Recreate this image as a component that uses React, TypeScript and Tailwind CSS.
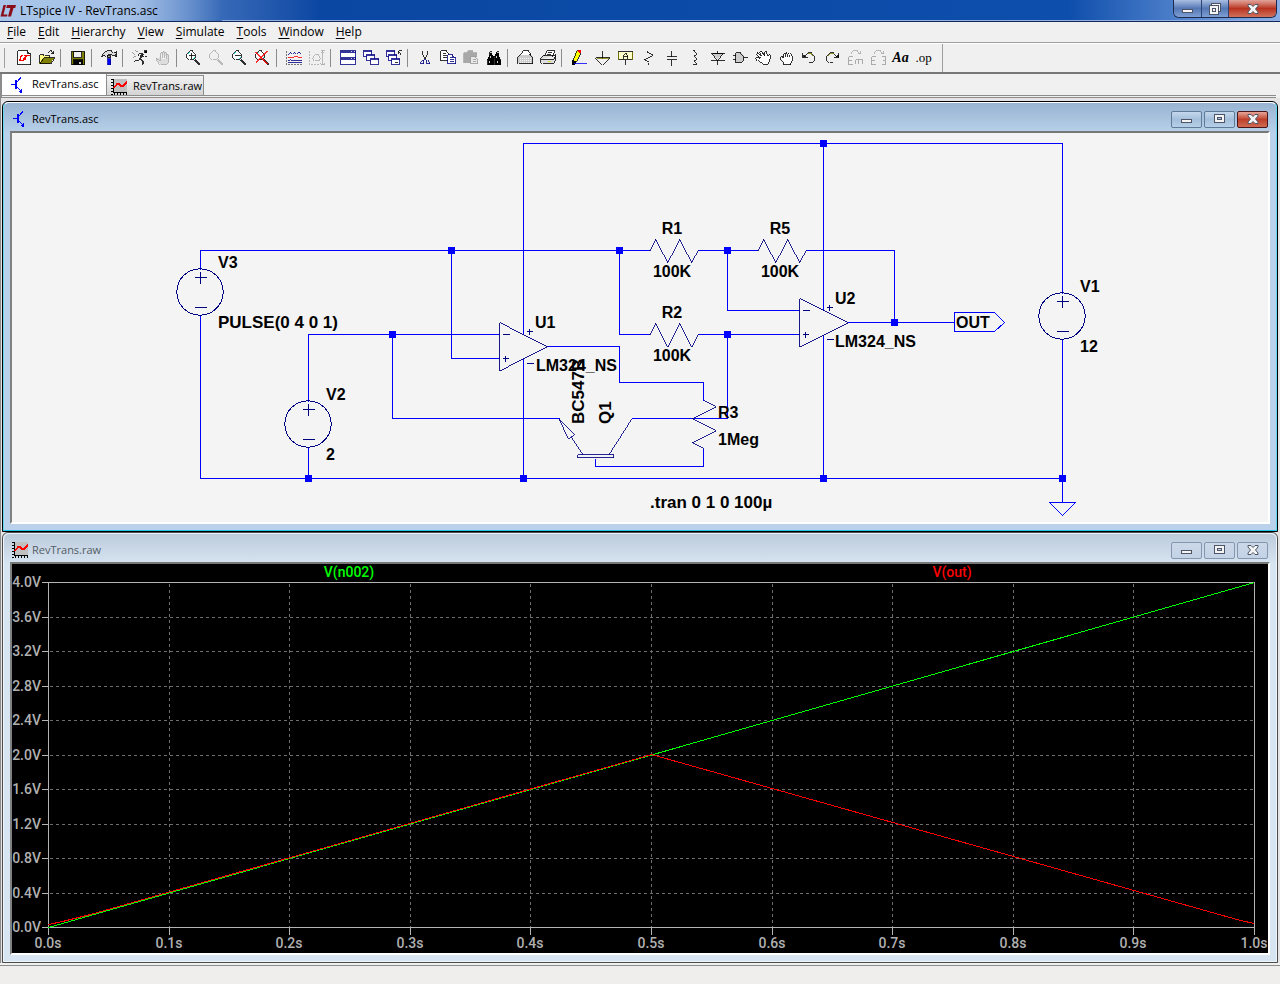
import type { ReactNode } from "react";

const menus = ["File", "Edit", "Hierarchy", "View", "Simulate", "Tools", "Window", "Help"];

function Icon({ children }: { children: ReactNode }) {
  return (
    <svg className="h-4 w-4" viewBox="0 0 16 16" fill="none" stroke="#000" strokeWidth=".8" shapeRendering="crispEdges" aria-hidden="true">
      <g transform="translate(.5 .5)">{children}</g>
    </svg>
  );
}

function Lens({ color = "#000", children }: { color?: string; children?: ReactNode }) {
  return (
    <>
      <path d="M3 0H6L9 3V6L6 9H3L0 6V3Z" stroke={color} fill={color === "#000" ? "#fff" : "none"} />
      {color === "#000" && <path d="M2 3V2H3M7 7V8M8 7H7" stroke="#00dede" />}
      <path d="M9 9L14 14M9 8L14 13M8 9L13 14" stroke={color} />
      {children}
    </>
  );
}

function MiniWindow({ x, y }: { x: number; y: number }) {
  return (
    <>
      <rect x={x} y={y} width="8" height="6" fill="#fff" stroke="#000080" />
      <path d={`M${x} ${y + 1}H${x + 8}`} stroke="#000080" />
    </>
  );
}

type Tool = { name: string; icon: ReactNode };

const groups: Tool[][] = [
  [
    {
      name: "New Schematic",
      icon: (
        <>
          <path d="M1 0H11L14 3V14H1Z" fill="#fff" />
          <path d="M11 0V3H14" />
          <path d="M5 5L3 10H7L8 7M7 5H13M10 5L8 10M6 5H4" stroke="#f00" strokeWidth="1.4" />
        </>
      ),
    },
    {
      name: "Open",
      icon: (
        <>
          <path d="M0 13V4H4L5 5H10V7" fill="#ff8" />
          <path d="M0 13L4 7H15L11 13Z" fill="#808000" />
          <path d="M8 2L10 0H12L14 2M14 0V3H11" />
        </>
      ),
    },
  ],
  [
    {
      name: "Save",
      icon: (
        <>
          <rect x="1" y="1" width="13" height="13" fill="#808000" />
          <rect x="3" y="1" width="8" height="6" fill="#efefef" />
          <rect x="3" y="9" width="9" height="5" fill="#000" />
          <path d="M10 11V13M9 11V13" stroke="#fff" />
        </>
      ),
    },
  ],
  [
    {
      name: "Control Panel",
      icon: (
        <>
          <path d="M0 5L2 2L5 0H10L12 2H14V1H15V6H14V4L11 5L9 4H6L5 6L3 4L0 6Z" fill="#ddd" />
          <rect x="6" y="5" width="3" height="2" fill="#999" />
          <rect x="6" y="8" width="3" height="6" fill="#00f" stroke="#0000a0" />
        </>
      ),
    },
  ],
  [
    {
      name: "Run",
      icon: (
        <>
          <rect x="12" y="0" width="2" height="2" fill="#000" />
          <path d="M11 3L8 7M10 3L7 7M9 3L7 6M10 3H6L5 5M10 4L12 6H14M8 7L11 10L10 14M7 7L10 10V13M7 8L5 10H2L1 11" />
          <path d="M0 1L3 4M2 0L5 2M0 7L3 5" stroke="#888" />
        </>
      ),
    },
    {
      name: "Halt",
      icon: (
        <path
          d="M3 9L1 7V9L5 14H10L13 11V4L12 3L11 4V8M11 4V2L10 1L9 2V7M9 2V1L8 0L7 1V7M7 2L6 1L5 2V10L3 8"
          stroke="#aaa"
          fill="#ddd"
        />
      ),
    },
  ],
  [
    { name: "Zoom area", icon: <Lens><path d="M2 5H8M5 2V8" /></Lens> },
    { name: "Pan", icon: <Lens color="#aaa" /> },
    { name: "Zoom back", icon: <Lens><path d="M2 5H8" /></Lens> },
    {
      name: "Zoom full extents",
      icon: (
        <Lens>
          <path d="M0 1L12 13M1 1L13 13M0 12L12 0M0 11L11 0" stroke="#f00" />
        </Lens>
      ),
    },
  ],
  [
    {
      name: "Autorange",
      icon: (
        <>
          <path d="M0 0V14H15" stroke="#555" strokeDasharray="2 1" />
          <path d="M1 4L4 1L6 3L8 1L10 3L13 1L15 3" stroke="#000080" />
          <path d="M1 7H5L7 6H10L12 7H15" stroke="#f00" />
          <path d="M1 10L3 9L5 10H15M1 12H15" stroke="#000080" />
        </>
      ),
    },
    {
      name: "Setup",
      icon: (
        <g stroke="#aaa">
          <path d="M0 0V14H10" strokeDasharray="2 1" />
          <path d="M3 7L5 4H9L11 7L9 10H5Z" />
          <path d="M11 0H15M13 0V14M11 14H15M11 2L13 0L15 2M11 12L13 14L15 12" />
        </g>
      ),
    },
  ],
  [
    {
      name: "Tile Windows",
      icon: (
        <>
          <rect x="0" y="0" width="15" height="14" fill="#fff" stroke="#000080" />
          <path d="M0 1H15M0 2H15M0 7H15M0 8H15M0 9H15" stroke="#000080" />
          <path d="M10 1H11M13 1H14M10 8H11M13 8H14" stroke="#fff" />
        </>
      ),
    },
    {
      name: "Cascade Windows",
      icon: (
        <>
          <MiniWindow x={0} y={0} />
          <MiniWindow x={3} y={4} />
          <MiniWindow x={7} y={8} />
        </>
      ),
    },
    {
      name: "Close All",
      icon: (
        <>
          <MiniWindow x={0} y={0} />
          <MiniWindow x={2} y={4} />
          <MiniWindow x={5} y={8} />
          <path d="M12 0H15M12 0V3M12 0L15 4" />
          <path d="M8 12H11" />
        </>
      ),
    },
  ],
  [
    {
      name: "Cut",
      icon: (
        <>
          <path d="M5 0V3L8 8M10 0V3L7 8" />
          <path d="M7 8L5 10H4L3 11V13H6V9M8 8L10 10H11L12 11V13H9V9" stroke="#000080" />
        </>
      ),
    },
    {
      name: "Copy",
      icon: (
        <>
          <path d="M0 0H6L8 2V10H0Z" fill="#fff" />
          <path d="M2 3H5M2 5H6M2 7H6" />
          <path d="M7 4H12L15 7V13H7Z" fill="#fff" stroke="#000080" />
          <path d="M9 7H11M9 9H13M9 11H13M12 4V7H15" stroke="#000080" />
        </>
      ),
    },
    {
      name: "Paste",
      icon: (
        <>
          <path d="M0 2H4V0H9V2H13V12H0Z" fill="#a8a8a8" stroke="#a8a8a8" />
          <path d="M7 6H12L14 8V13H7Z" fill="#e8e8e8" stroke="#999" />
          <path d="M9 9H12M9 11H12" stroke="#999" />
        </>
      ),
    },
    {
      name: "Find",
      icon: (
        <>
          <path d="M3 1H5V4L7 6V14H1V9L3 4ZM10 1H12V4L14 9V14H8V6Z" fill="#000" />
          <path d="M6 6H9M6 8H9" />
          <path d="M4 5V7M3 10V12M10 5V7M11 10V12M3 2H5M10 2H12" stroke="#fff" />
        </>
      ),
    },
  ],
  [
    {
      name: "Print Setup",
      icon: (
        <>
          <path d="M3 5L5 0H11L14 4V5Z" fill="#fff" />
          <path d="M0 6L2 4H13L15 6V13H1L0 12Z" fill="#ccc" />
          <path d="M4 4L6 1H11L12 4Z" fill="#fff" stroke="none" />
          <path d="M2 8H13M2 10H13M2 12H13" stroke="#fff" strokeDasharray="1 1" />
        </>
      ),
    },
    {
      name: "Print",
      icon: (
        <>
          <path d="M3 6L6 0H14L11 6Z" fill="#fff" />
          <path d="M7 2H11M6 4H10" />
          <path d="M0 7L2 5H12L15 4V9L12 13H2L0 11ZM0 9H12L15 5" fill="#ddd" />
          <path d="M7 11H10" stroke="#dd0" />
        </>
      ),
    },
  ],
  [
    {
      name: "Wire",
      icon: (
        <>
          <path d="M2 8L5 0L9 2L5 10L2 12Z" fill="#ff0" />
          <path d="M6 0H8V2" stroke="#f00" strokeWidth="2" />
          <path d="M1 9V13H3L4 11" strokeWidth="2" />
          <path d="M2 13H15" stroke="#00f" />
        </>
      ),
    },
    {
      name: "Ground",
      icon: (
        <>
          <path d="M8 0V8M1 7H15L8 14Z" />
          <path d="M2 8H14" stroke="#808000" />
        </>
      ),
    },
    {
      name: "Label Net",
      icon: (
        <>
          <rect x="1" y="1" width="14" height="8" fill="#ffc" />
          <path d="M1 1V9M15 1V9" stroke="#808000" />
          <path d="M6 8V4L7 3H9L10 4V8M6 6H10M8 9V14" />
        </>
      ),
    },
    { name: "Resistor", icon: <path d="M7 0V2L12 5L3 9L8 12V14" /> },
    { name: "Capacitor", icon: <path d="M8 0V6M3 6H13M3 9H13M8 9V15" /> },
    { name: "Inductor", icon: <path d="M6 0H8L10 2V3L8 5H7M8 5L10 7V8L8 10H7M8 10L10 12V13L9 14H6" /> },
    {
      name: "Diode",
      icon: (
        <>
          <path d="M3 3H13L8 9Z" fill="#ccc" />
          <path d="M8 0V3M8 9V14M1 3H15M1 10H15" />
        </>
      ),
    },
    { name: "Component", icon: <path d="M0 5H3M0 9H3M3 2H8L11 5V9L8 12H3ZM11 7H15" fill="#ccc" /> },
    {
      name: "Move",
      icon: (
        <path
          d="M7 14L2 10L0 7L2 6L5 8L1 3L2 1L6 5L4 1L6 0L9 5V1L11 1L12 5L14 3L15 5L14 10L11 14Z"
          fill="#fff"
        />
      ),
    },
    {
      name: "Drag",
      icon: <path d="M5 14V11L2 8V6H4L5 7V3H6L7 2H8L9 3L10 2L11 3L13 4L14 6V9L12 12V14ZM7 3V6M9 3V6M11 4V6" fill="#fff" />,
    },
    {
      name: "Undo",
      icon: (
        <>
          <path d="M3 5L6 2H10L13 5V9L10 12H7" />
          <path d="M6 3H10L12 5" stroke="#808000" />
          <path d="M1 2V7H6M1 6H4M1 5H3M2 6L3 5" />
        </>
      ),
    },
    {
      name: "Redo",
      icon: (
        <>
          <path d="M12 5L9 2H5L2 5V9L5 12H8" />
          <path d="M9 3H5L3 5" stroke="#808000" />
          <path d="M14 2V7H9M14 6H11M14 5H12M13 6L12 5" />
        </>
      ),
    },
    {
      name: "Rotate",
      icon: (
        <g stroke="#aaa">
          <path d="M3 3L5 0H10L13 3M13 0V3H10" />
          <path d="M1 6V14M1 6H5M1 10H4M1 14H5M8 9H15M8 9V13M11 9V13M15 9V13" strokeWidth="1.4" />
        </g>
      ),
    },
    {
      name: "Mirror",
      icon: (
        <g stroke="#aaa">
          <path d="M3 3L5 0H10L13 3M13 0V3H10" />
          <path d="M1 6V14M1 6H5M1 10H4M1 14H5M15 6V14M15 6H11M15 10H12M15 14H11" strokeWidth="1.4" />
        </g>
      ),
    },
  ],
];

function AppLogo() {
  return (
    <svg className="h-4 w-4" viewBox="0 0 16 16" aria-hidden="true">
      <path d="M3.500 2H6L3.500 11.500H7.500L7 13.500H.5Z" fill="#8b0f1a" />
      <path d="M7 2H16L15.200 5H13.500L11 13.500H8L10.300 5H6.200Z" fill="#8b0f1a" />
    </svg>
  );
}

function SchematicIcon() {
  return (
    <svg className="h-4 w-4" viewBox="0 0 16 16" fill="none" stroke="#00f" shapeRendering="crispEdges" aria-hidden="true">
      <path d="M1 7.500H6M10.500 0V1L7 5M7 10L11 14" />
      <path d="M5 3H7V12H5Z" fill="#00f" stroke="none" />
      <path d="M12 16V11L8 15Z" fill="#00f" stroke="none" />
    </svg>
  );
}

function WaveIcon() {
  return (
    <svg className="h-4 w-4" viewBox="0 0 16 16" fill="none" shapeRendering="crispEdges" aria-hidden="true">
      <path d="M2 0H16V14H2Z" fill="#c0c0c0" />
      <path d="M1 0V16" stroke="#000" strokeWidth="2" strokeDasharray="1 2" />
      <path d="M2.500 0V13.500H16" stroke="#000" />
      <path d="M3 15H16" stroke="#000" strokeWidth="2" strokeDasharray="1 2" />
      <path d="M3 9L6 5H8L10 7H12L16 3" stroke="#f00" strokeWidth="1.500" />
    </svg>
  );
}

function ButtonGlyph({ kind }: { kind: "min" | "max" | "restore" | "close" }) {
  return (
    <svg className="h-3 w-3" viewBox="0 0 12 12" fill="#f4f4f4" stroke="#4c5468" shapeRendering="crispEdges" aria-hidden="true">
      {kind === "min" && <rect x=".5" y="6.500" width="10" height="3" />}
      {kind === "max" && <path d="M.5 1.500H10.500V9.500H.5ZM3.500 4.500H7.500V6.500H3.500Z" fillRule="evenodd" />}
      {kind === "restore" && (
        <>
          <path d="M2.500 .5H11.500V8.500H2.500Z" />
          <path d="M.5 2.500H9.500V11.500H.5ZM3.500 5.500H6.500V8.500H3.500Z" fillRule="evenodd" />
        </>
      )}
      {kind === "close" && (
        <path
          d="M1 1.500H4L6 3.500L8 1.500H11V3L8.500 6L11 9V10.500H8L6 8.500L4 10.500H1V9L3.500 6L1 3Z"
          shapeRendering="auto"
        />
      )}
    </svg>
  );
}

function ChildWindow({ title, icon, active, children }: { title: string; icon: ReactNode; active?: boolean; children: ReactNode }) {
  const frame = active ? "border-black bg-[#b9d1ea]" : "border-[#4b4b4b] bg-[#d7e4f2]";
  const inner = active
    ? "border-t-white border-x-[#5fd8f0] border-b-[#20c8e8] from-[#98b4d2] to-[#b9d1ea]"
    : "border-[#eef4fa] from-[#bccbdb] to-[#d7e4f2]";
  const button = active
    ? "border-[#5f7a99] bg-linear-to-b from-[#c4d8ec] via-[#a4bfdb] to-[#b7cfe8]"
    : "border-[#8496b0] bg-linear-to-b from-[#cbd8e8] to-[#c3d2e5]";
  const close = active ? "border-[#4a1418] bg-linear-to-b from-[#e6a598] via-[#bd3f2a] to-[#cf6a52]" : button;
  return (
    <section className={`rounded-t-md border ${frame}`}>
      <div className={`rounded-t-md border bg-linear-to-b bg-[length:100%_30px] bg-no-repeat px-1.5 pb-1.5 ${inner}`}>
        <header className="flex h-7 items-center justify-between pt-1 pl-0.5">
          <div className={`flex items-center gap-1 text-[11px] ${active ? "text-black" : "text-[#555c66]"}`}>
            {icon}
            <h2>{title}</h2>
          </div>
          <div className="flex gap-0.5 pr-0.5">
            <button aria-label="Minimize" className={`flex h-[17px] w-[31px] items-center justify-center rounded-xs border ${button}`}>
              <ButtonGlyph kind="min" />
            </button>
            <button aria-label="Maximize" className={`flex h-[17px] w-[31px] items-center justify-center rounded-xs border ${button}`}>
              <ButtonGlyph kind="max" />
            </button>
            <button aria-label="Close" className={`flex h-[17px] w-[31px] items-center justify-center rounded-xs border ${close}`}>
              <ButtonGlyph kind="close" />
            </button>
          </div>
        </header>
        <div className="border-2 border-t-[#777] border-r-white border-b-white border-l-[#808080]">{children}</div>
      </div>
    </section>
  );
}

function Source({ x, y }: { x: number; y: number }) {
  return (
    <g stroke="#000080">
      <circle cx={x - 0.5} cy={y - 0.5} r="23.2" />
      <path d={`M${x - 6} ${y - 15}H${x + 6}M${x} ${y - 21}V${y - 9}M${x - 6} ${y + 15}H${x + 6}`} />
    </g>
  );
}

function OpAmp({ x, y }: { x: number; y: number }) {
  return (
    <g stroke="#000080" transform={`translate(${x} ${y})`}>
      <path d="M0 -24V24L48 0Z" strokeWidth=".9" />
      <path d="M3 -12H10M3 12H9M6 9V15M27 -15H33M30 -18V-12M27 17H34" />
    </g>
  );
}

function Resistor({ x, y }: { x: number; y: number }) {
  return (
    <path
      stroke="#000080"
      strokeWidth=".85"
      transform={`translate(${x} ${y})`}
      d="M0 0H1L7 -12L19 12L31 -12L43 12L49 0H50"
    />
  );
}

const nodes = [
  [823, 143], [451, 250], [619, 250], [727, 250], [392, 334], [727, 334],
  [894, 322], [308, 478], [523, 478], [823, 478], [1062, 478],
];

const labels: { x: number; y: number; text: string; middle?: boolean }[] = [
  { x: 218, y: 268, text: "V3" },
  { x: 326, y: 400, text: "V2" },
  { x: 326, y: 460, text: "2" },
  { x: 1080, y: 292, text: "V1" },
  { x: 1080, y: 352, text: "12" },
  { x: 535, y: 328, text: "U1" },
  { x: 536, y: 371, text: "LM324_NS" },
  { x: 835, y: 304, text: "U2" },
  { x: 835, y: 347, text: "LM324_NS" },
  { x: 672, y: 234, text: "R1", middle: true },
  { x: 672, y: 277, text: "100K", middle: true },
  { x: 672, y: 318, text: "R2", middle: true },
  { x: 672, y: 361, text: "100K", middle: true },
  { x: 780, y: 234, text: "R5", middle: true },
  { x: 780, y: 277, text: "100K", middle: true },
  { x: 718, y: 418, text: "R3" },
  { x: 718, y: 445, text: "1Meg" },
  { x: 956, y: 328, text: "OUT" },
];

function Schematic() {
  return (
    <svg className="block h-auto w-full bg-[#f4f4f4]" viewBox="12 133 1256 389" role="img" aria-label="RevTrans.asc">
      <g transform="translate(.5 .5)" fill="none" stroke="#00f" shapeRendering="crispEdges">
        <path d="M200 269V250H649M697 250H757M805 250H894V322M200 315V478H1062" />
        <path d="M308 401V334H499M308 447V478M451 250V358H499M392 334V418H559" />
        <path d="M523 334V143H1062V293M523 358V478M823 143V310M823 334V478" />
        <path d="M619 250V334H649M697 334H799M727 250V310H799M727 334V418H631" />
        <path d="M547 346H619V382H703V400M703 448V466H595V458" />
        <path d="M847 322H953M954 312H994L1004 322L994 331H954Z" />
        <path d="M1062 339V502M1049 502H1075L1062 515Z" />
        <Source x={200} y={292} />
        <Source x={308} y={424} />
        <Source x={1062} y={316} />
        <OpAmp x={499} y={346} />
        <OpAmp x={799} y={322} />
        <Resistor x={648} y={250} />
        <Resistor x={756} y={250} />
        <Resistor x={648} y={334} />
        <g stroke="#000080" strokeWidth=".85">
          <path d="M703 400L715 406L691 418L715 430L691 442L703 448" />
          <path d="M577 454H613V457H577ZM559 418L568 438L574 433ZM571 436L583 454M631 418L608 454" />
        </g>
      </g>
      {nodes.map(([x, y]) => (
        <rect key={`${x}-${y}`} x={x - 3} y={y - 3} width="7" height="7" fill="#00f" />
      ))}
      <g className="font-['Liberation_Sans',Arial,sans-serif] text-[16px] font-bold">
        {labels.map((l) => (
          <text key={`${l.x}-${l.y}`} x={l.x} y={l.y} textAnchor={l.middle ? "middle" : "start"}>
            {l.text}
          </text>
        ))}
        <g className="text-[17px]">
          <text x="218" y="328">PULSE(0 4 0 1)</text>
          <text x="650" y="508">.tran 0 1 0 100µ</text>
          <text transform="translate(584 424) rotate(-90)">BC547B</text>
          <text transform="translate(611 424) rotate(-90)">Q1</text>
        </g>
      </g>
    </svg>
  );
}

const steps = Array.from({ length: 11 }, (_, i) => i);
const tickX = (i: number) => Math.round(48 + i * 120.6);
const tickY = (i: number) => Math.round(927 - i * 34.5);

function Plot() {
  return (
    <svg className="block h-auto w-full bg-black" viewBox="12 564 1256 389" role="img" aria-label="RevTrans.raw">
      <g transform="translate(.5 .5)" fill="none" shapeRendering="crispEdges">
        <g stroke="#6e6e6e" strokeDasharray="3 3">
          {steps.slice(1, 10).map((i) => (
            <path key={i} d={`M${tickX(i)} 583V927M49 ${tickY(i)}H1254`} />
          ))}
        </g>
        <g stroke="#b4b4b4">
          <path d="M48 582H1254V927H48Z" />
          {steps.map((i) => (
            <path key={i} d={`M${tickX(i)} 927V934M41 ${tickY(i)}H48`} />
          ))}
        </g>
        <path d="M48 927L1254 582" stroke="#0f0" />
        <path d="M48 924L62 921L90 914L651 754L1240 920L1254 923" stroke="#f00" />
      </g>
      <g className="font-[Roboto,'Liberation_Sans',sans-serif] text-[14px] font-medium" fill="#b0b0b0">
        {steps.map((i) => (
          <g key={i}>
            <text x="41" y={tickY(i) + 5} textAnchor="end">{(i * 0.4).toFixed(1)}V</text>
            <text x={tickX(i)} y="948" textAnchor="middle">{(i / 10).toFixed(1)}s</text>
          </g>
        ))}
        <text x="349" y="577" textAnchor="middle" fill="#0f0">V(n002)</text>
        <text x="952" y="577" textAnchor="middle" fill="#f00">V(out)</text>
      </g>
    </svg>
  );
}

export default function App() {
  return (
    <div className="flex min-h-screen flex-col bg-[#f0f0f0] font-['Open_Sans','Noto_Sans',sans-serif] text-[11px] text-black">
      <header className="flex h-[22px] items-start justify-between border-b border-[#12275a] bg-linear-to-r from-[#8fb4e2] via-[#0a47a3] via-25% to-[#0f50ae]">
        <div className="flex h-[21px] items-center gap-1 bg-linear-to-r from-[#a9c6ea] via-[#a3bfe6] via-60% to-transparent pr-16">
          <AppLogo />
          <h1 className="text-xs">LTspice IV - RevTrans.asc</h1>
        </div>
        <div className="flex h-[21px] flex-1 justify-end border-b border-[#8fb0e0] bg-linear-to-r from-transparent from-80% to-[#8aaee6] pr-[3px]">
          <div className="flex h-[18px] overflow-hidden rounded-b-md border border-t-0 border-[#1c2b4c]">
            <button aria-label="Minimize window" className="flex w-7 items-center justify-center border-r border-[#2c4270] bg-linear-to-b from-[#a9bfe2] via-[#5577b4] to-[#7e9fd4]">
              <ButtonGlyph kind="min" />
            </button>
            <button aria-label="Restore window" className="flex w-[27px] items-center justify-center border-r border-[#2c4270] bg-linear-to-b from-[#a9bfe2] via-[#5577b4] to-[#7e9fd4]">
              <ButtonGlyph kind="restore" />
            </button>
            <button aria-label="Close window" className="flex w-[47px] items-center justify-center bg-linear-to-b from-[#e0a49c] via-[#b8321f] to-[#d0705a]">
              <ButtonGlyph kind="close" />
            </button>
          </div>
        </div>
      </header>

      <nav className="flex h-[21px] items-center gap-3 border-b border-[#a0a0a0] pl-[7px] text-xs">
        {menus.map((m) => (
          <button key={m}>
            <span className="underline underline-offset-2">{m[0]}</span>
            {m.slice(1)}
          </button>
        ))}
      </nav>

      <div className="flex h-[31px] border-t border-b-2 border-t-white border-b-[#767676]">
        <div className="flex items-center border-r border-[#a0a0a0] pr-[7px]">
          <div className="mr-[7px] ml-1 h-5 w-px bg-[#a0a0a0]" />
          {groups.map((group, g) => (
            <div key={g} className="flex items-center">
              {g > 0 && <div className="mr-[5px] ml-0.5 h-[18px] w-px bg-[#8c8c8c]" />}
              {group.map((t) => (
                <button key={t.name} aria-label={t.name} className="flex h-6 w-[23px] items-center justify-center">
                  <Icon>{t.icon}</Icon>
                </button>
              ))}
            </div>
          ))}
          <button className="w-[23px] font-['Liberation_Serif',serif] text-sm font-bold italic">Aa</button>
          <button className="w-[23px] font-['Liberation_Serif',serif] text-[13px]">.op</button>
        </div>
      </div>

      <div className="mr-1 flex h-6 items-end border-b border-l-2 border-[#8c8c8c] bg-[#f0f0f0]">
        <div className="mb-px flex flex-1 items-end border-b border-[#8c8c8c]">
          <button className="flex h-[21px] w-[105px] items-center gap-1.5 border-r border-[#8c8c8c] bg-white pl-2">
            <SchematicIcon />
            RevTrans.asc
          </button>
          <button className="flex h-5 w-[97px] items-center gap-1.5 border-t border-r border-[#8c8c8c] bg-linear-to-b from-[#f2f2f2] to-[#d4d4d4] pt-0.5 pl-1">
            <WaveIcon />
            RevTrans.raw
          </button>
        </div>
      </div>

      <main className="border-l border-[#8c8c8c] bg-[#e4e4e4] pt-[3px] pr-0.5 pl-px">
        <ChildWindow title="RevTrans.asc" icon={<SchematicIcon />} active>
          <Schematic />
        </ChildWindow>
        <ChildWindow title="RevTrans.raw" icon={<WaveIcon />}>
          <Plot />
        </ChildWindow>
      </main>

      <footer className="mt-0.5 flex-1 border-t border-[#8c8c8c] bg-[#f0eded]" />
    </div>
  );
}
